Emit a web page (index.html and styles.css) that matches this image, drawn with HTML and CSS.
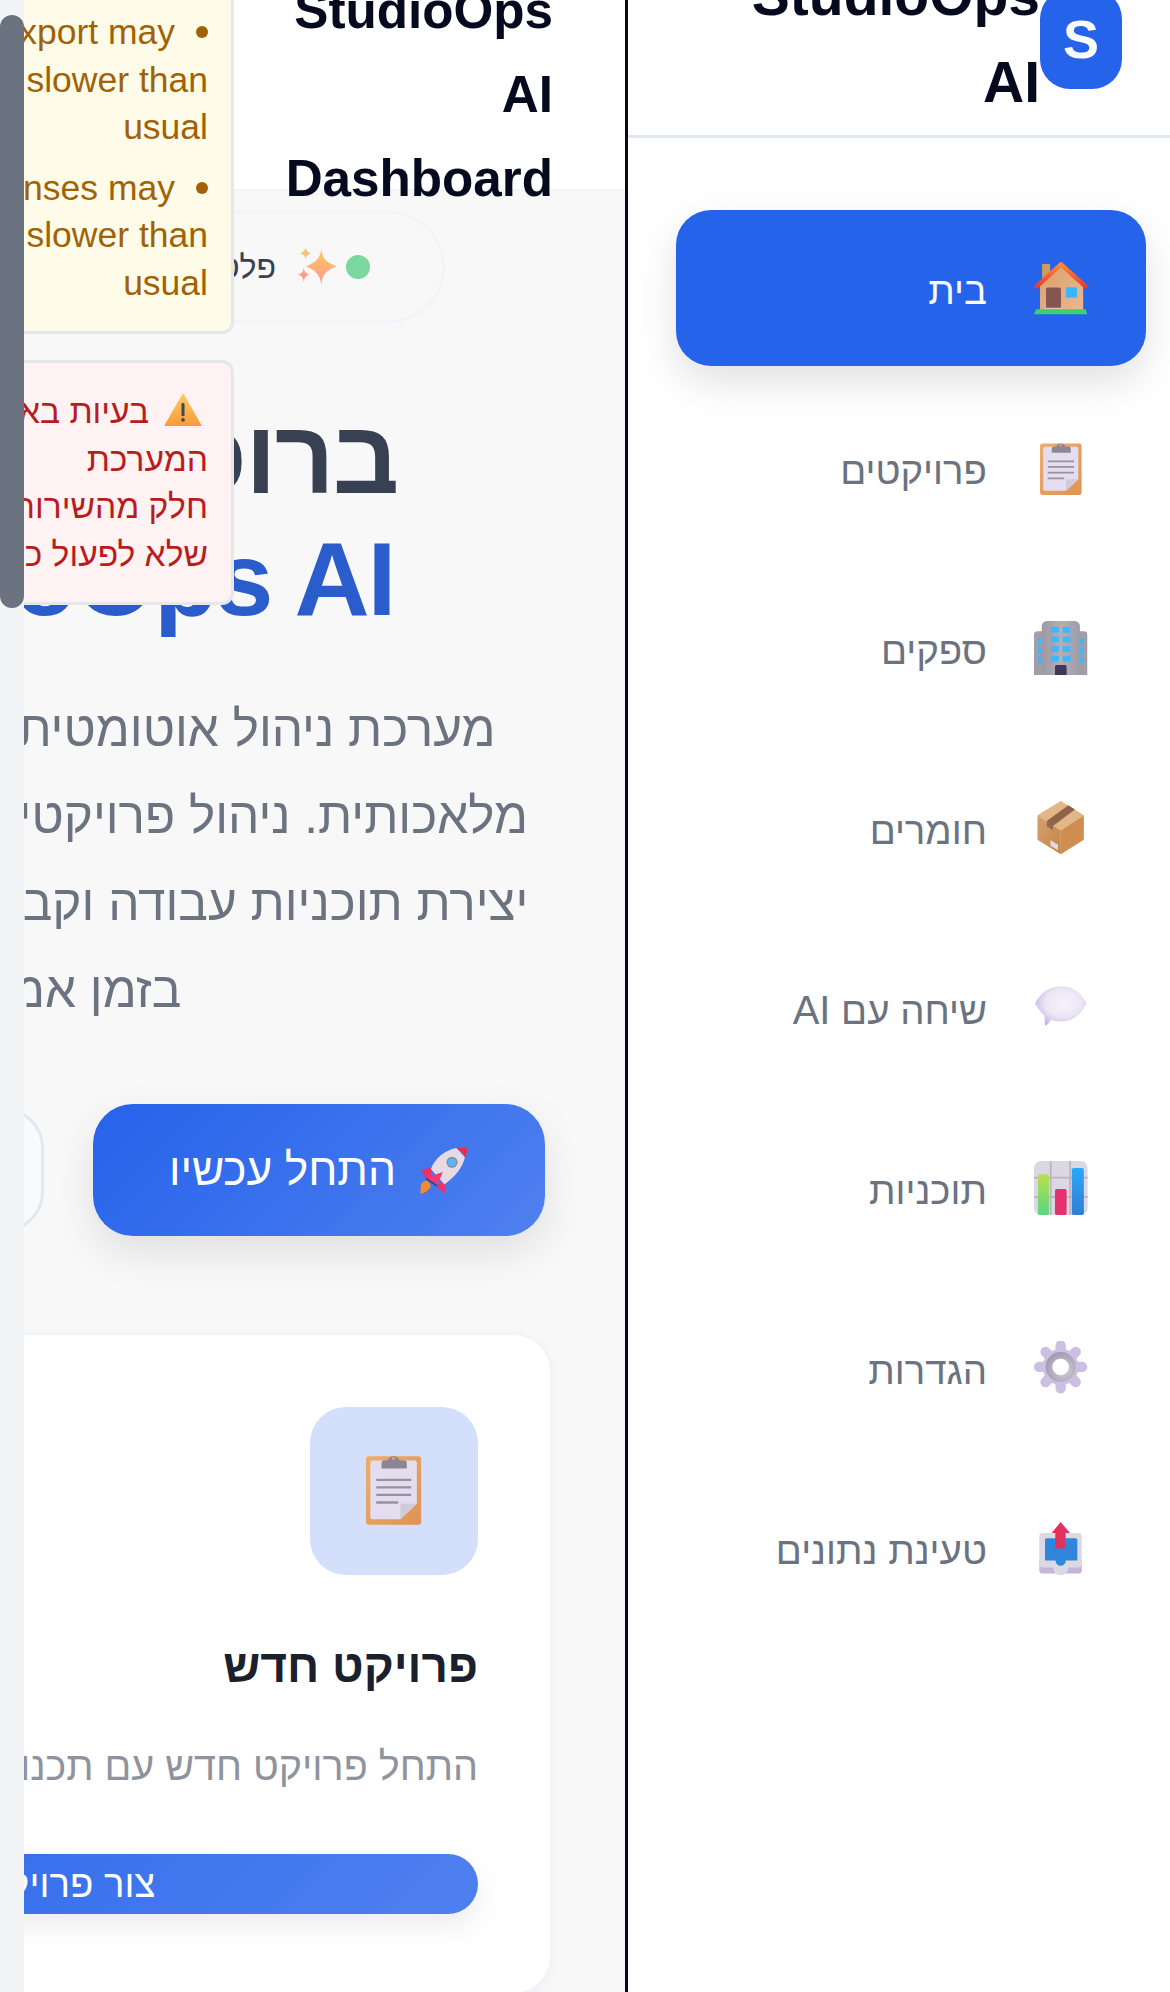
FILE: index.html
```html
<!DOCTYPE html>
<html lang="he">

<head>
    <meta charset="utf-8">
    <title>StudioOps AI Dashboard</title>
    <link rel="stylesheet" href="styles.css">
</head>

<body>
    <svg class="defs" aria-hidden="true">
        <defs>
            <linearGradient id="g-orange" x1="0" y1="0" x2="1" y2="1">
                <stop offset="0" stop-color="#efac6c" />
                <stop offset="1" stop-color="#df9354" />
            </linearGradient>
            <linearGradient id="g-roof" x1="0" y1="0" x2="0" y2="1">
                <stop offset="0" stop-color="#ff8a2e" />
                <stop offset="1" stop-color="#e23e2e" />
            </linearGradient>
            <linearGradient id="g-wall" x1="0" y1="0" x2="1" y2="1">
                <stop offset="0" stop-color="#dba06c" />
                <stop offset="1" stop-color="#eab78f" />
            </linearGradient>
            <linearGradient id="g-tower" x1="0" y1="0" x2="1" y2="0">
                <stop offset="0" stop-color="#9c98a4" />
                <stop offset=".5" stop-color="#b3afb8" />
                <stop offset="1" stop-color="#a09ca8" />
            </linearGradient>
            <linearGradient id="g-box" x1="0" y1="0" x2="1" y2="1">
                <stop offset="0" stop-color="#d7a174" />
                <stop offset="1" stop-color="#c6843f" />
            </linearGradient>
            <linearGradient id="g-lime" x1="0" y1="0" x2="0" y2="1">
                <stop offset="0" stop-color="#b8e24a" />
                <stop offset="1" stop-color="#58d680" />
            </linearGradient>
            <linearGradient id="g-sky" x1="0" y1="0" x2="0" y2="1">
                <stop offset="0" stop-color="#2aa8f8" />
                <stop offset="1" stop-color="#2f7dd6" />
            </linearGradient>
            <linearGradient id="g-arrow" x1="0" y1="0" x2="1" y2="0">
                <stop offset="0" stop-color="#ea2a44" />
                <stop offset="1" stop-color="#d63a78" />
            </linearGradient>
            <linearGradient id="g-spark" x1="0" y1="0" x2="0" y2="1">
                <stop offset="0" stop-color="#ffc95e" />
                <stop offset="1" stop-color="#ff9a8c" />
            </linearGradient>
            <linearGradient id="g-warn" x1="0" y1="0" x2="0" y2="1">
                <stop offset="0" stop-color="#ffcb5c" />
                <stop offset="1" stop-color="#f89b3e" />
            </linearGradient>
            <radialGradient id="g-bubble" cx=".55" cy=".42" r=".6">
                <stop offset="0" stop-color="#f6f3fa" />
                <stop offset=".6" stop-color="#ebe5f4" />
                <stop offset="1" stop-color="#c4b7e0" />
            </radialGradient>
            <radialGradient id="g-ring" cx=".6" cy=".6" r=".6">
                <stop offset="0" stop-color="#d6d2dd" />
                <stop offset="1" stop-color="#a29cb0" />
            </radialGradient>

            <symbol id="i-clipboard" viewBox="0 0 32 32">
                <rect x="3.5" y="1.4" width="24.2" height="30" rx="1.4" fill="url(#g-orange)" />
                <path d="M6.4 3.3H24.8a1 1 0 0 1 1 1V22.3L18.6 29H6.4a1 1 0 0 1-1-1V4.3a1 1 0 0 1 1-1Z" fill="#e4ddf0" />
                <path d="M18.6 22.3H25.8L18.6 29Z" fill="#d0cbd8" />
                <path d="M10.3 6.800V4.600a1.400 1.400 0 0 1 1.400-1.400H13a2.800 2.800 0 0 1 5.200 0H20a1.400 1.400 0 0 1 1.400 1.400V6.800Z" fill="#8c8694" />
                <circle cx="15.600" cy="2.400" r=".7" fill="#e9a05c" />
                <path d="M8 11.800H23.300M8 15.100H23.300M8 18.400H23.300M8 21.700H17.600" stroke="#97929e" stroke-width="1" fill="none" />
            </symbol>

            <symbol id="i-home" viewBox="0 0 32 32">
                <rect x="4.700" y="1.700" width="4.700" height="10" fill="#cf9a63" />
                <path d="M3.500 13.500L15.700 2L28.600 13.500V28.600H3.500Z" fill="url(#g-wall)" />
                <path d="M1.600 14.800L15.700 2L30 14.800" fill="none" stroke="url(#g-roof)" stroke-width="2.600" stroke-linejoin="round" stroke-linecap="round" />
                <path d="M7 16.400a1 1 0 0 1 1-1H14.700a1 1 0 0 1 1 1V27.400H7Z" fill="#85564f" />
                <rect x="18.600" y="15.300" width="6.400" height="6" fill="#38b6ff" />
                <rect x="6.500" y="27.200" width="9.500" height="1" fill="#cfc8c4" />
                <path d="M1.200 28H30L31 31H0Z" fill="#3fcf6f" />
            </symbol>

            <symbol id="i-building" viewBox="0 0 32 32">
                <path d="M0 31.400V8a2 2 0 0 1 2-2H29a2 2 0 0 1 2 2V31.400Z" fill="#a19ea8" />
                <path d="M4.500 31.400V3a3 3 0 0 1 3-3H23.700a3 3 0 0 1 3 3V31.400Z" fill="url(#g-tower)" />
                <g fill="#3cb8fb">
                    <rect x="9.900" y="3.500" width="4.600" height="3.300" />
                    <rect x="16.700" y="3.500" width="4.600" height="3.300" />
                    <rect x="9.900" y="9.100" width="4.600" height="3.300" />
                    <rect x="16.700" y="9.100" width="4.600" height="3.300" />
                    <rect x="9.900" y="14.700" width="4.600" height="3.300" />
                    <rect x="16.700" y="14.700" width="4.600" height="3.300" />
                    <rect x="9.900" y="20.300" width="4.600" height="3.300" />
                    <rect x="16.700" y="20.300" width="4.600" height="3.300" />
                    <rect x="2.300" y="10" width="2.200" height="3.500" />
                    <rect x="2.300" y="15.700" width="2.200" height="3.500" />
                    <rect x="2.300" y="21" width="2.200" height="3.400" />
                    <rect x="26.700" y="10" width="2.200" height="3.500" />
                    <rect x="26.700" y="15.700" width="2.200" height="3.500" />
                    <rect x="26.700" y="21" width="2.200" height="3.400" />
                </g>
                <path d="M12.200 31.400V26.600a1 1 0 0 1 1-1H18a1 1 0 0 1 1 1V31.400Z" fill="#41365a" />
            </symbol>

            <symbol id="i-box" viewBox="0 0 32 32">
                <path d="M15.600 0L29 8.300L15.600 17L2 8.300Z" fill="#e3b688" />
                <path d="M2 8.300L15.600 17V31L2 22.500Z" fill="url(#g-box)" />
                <path d="M29 8.300V22.500L15.600 31V17Z" fill="#d08d50" />
                <path d="M7.400 11.700L20 2.500L23.800 5L11 14.500Z" fill="#8f6347" />
                <path d="M7.400 11.700L11 14L11 17L7.400 14.700Z" fill="#8e6a5c" />
                <path d="M9.600 22.900L14 25.400V28.600L9.600 26Z" fill="#dfd8ee" />
            </symbol>

            <symbol id="i-chat" viewBox="0 0 32 32">
                <path d="M15.700 3C24 3 28 8 30.600 13C28 18 24 23.500 15.700 23.500C13.400 23.500 11.600 23.200 10 22.600C9 24 8 25.600 6.500 26.200C6.200 24.500 6.200 22 6 20C3.500 18 2 15.500 .6 13C3 8 8 3 15.700 3Z" fill="url(#g-bubble)" />
            </symbol>

            <symbol id="i-chart" viewBox="0 0 32 32">
                <rect width="31.200" height="31.400" rx="4" fill="#dcd7e5" />
                <path d="M9.700 0V31.400M21 0V31.400M0 9.700H31.200M0 20.900H31.200" stroke="#bab4c1" stroke-width="1" fill="none" />
                <rect x="2.300" y="7.700" width="6.400" height="23.700" rx="1" fill="url(#g-lime)" />
                <rect x="12.200" y="16.300" width="6.800" height="15.100" rx="1" fill="#e5316f" />
                <rect x="22" y="4" width="7" height="27.400" rx="1" fill="url(#g-sky)" />
            </symbol>

            <symbol id="i-gear" viewBox="0 0 32 32">
                <g stroke="#cbbfe3" stroke-width="6" stroke-linecap="round">
                    <path d="M15.500 2.600V27.600" />
                    <path d="M3 15.100H28" />
                    <path d="M6.700 6.300L24.300 23.900" />
                    <path d="M24.300 6.300L6.700 23.900" />
                </g>
                <circle cx="15.500" cy="15.100" r="10.500" fill="#cbbfe3" />
                <circle cx="15.500" cy="15.100" r="8.700" fill="url(#g-ring)" />
                <circle cx="15.500" cy="15.100" r="4.800" fill="#fff" />
            </symbol>

            <symbol id="i-upload" viewBox="0 0 32 32">
                <rect x="3.100" y="21" width="24.700" height="9.600" rx="2" fill="#c4b5dc" />
                <path d="M3.100 9a2 2 0 0 1 2-2H25.800a2 2 0 0 1 2 2V25a2 2 0 0 1-2 2H20a4 4 0 0 1-9 0H5.100a2 2 0 0 1-2-2Z" fill="#dcd8e4" />
                <path d="M6.400 11a1 1 0 0 1 1-1H24.200a1 1 0 0 1 1 1V23H18.500a3 3 0 0 1-6 0H6.400Z" fill="#2f86db" />
                <path d="M15.500 .6L21 7H18.400V16H12.400V7H10.300Z" fill="url(#g-arrow)" />
            </symbol>

            <symbol id="i-rocket" viewBox="0 0 32 32">
                <path d="M.3 31.800L.6 26C1 24.500 3 23 4.500 23C6 23.500 7 25.500 7.400 26.700C6.500 28.500 4 31.500 .3 31.800Z" fill="#f88a2a" />
                <path d="M.5 16L8.600 13.500L7 20L5 22.700Z" fill="#ee2f6c" />
                <path d="M16.700 31.800L11 26.700L18 22L17.900 24.400Z" fill="#ee2f6c" />
                <path d="M24.800 .7C17 2 10 8 7.400 15L16.700 25.500C24 20 29 14 30.600 7Z" fill="#e6dbe4" />
                <path d="M24.800 .7C26.500 1 32.500 0 32.500 0C32.500 0 32 5.500 30.600 7C29.500 4.500 27.500 2 24.800 .7Z" fill="#f22a4e" />
                <circle cx="21.800" cy="10.400" r="3.800" fill="#8f8a9c" />
                <circle cx="21.800" cy="10.400" r="2.800" fill="#5ab4ff" />
                <path d="M4 21L15.500 17L12 25.500Z" fill="#f23a72" />
                <path d="M4 21.300L11.500 26.500" stroke="#4a3a5e" stroke-width="1" />
            </symbol>

            <symbol id="i-sparkles" viewBox="0 0 32 32">
                <path d="M19 1.500C20 9 22 12 31.500 15.500C22 19 20 22 19 30C18 22 15 19 7 15.500C15 12 18 9 19 1.500Z" fill="url(#g-spark)" />
                <path d="M6.600 0C7 3 8 4 11 5C8 6 7 7 6.600 10C6 7 5 6 2 5C5 4 6 3 6.600 0Z" fill="#f8c270" />
                <path d="M5 16.500C5.500 20 6.500 21 10 22C6.500 23 5.500 24.500 5 28C4.500 24.500 3.500 23 0 22C3.500 21 4.500 20 5 16.500Z" fill="#ff9d8a" />
            </symbol>

            <symbol id="i-warning" viewBox="0 0 36 32">
                <path d="M18 1L35.500 31.500H.5Z" fill="url(#g-warn)" stroke="url(#g-warn)" stroke-width="1" stroke-linejoin="round" />
                <rect x="16.500" y="9.500" width="3" height="13" rx="1.500" fill="#46465a" />
                <circle cx="18" cy="26" r="1.800" fill="#46465a" />
            </symbol>
        </defs>
    </svg>

    <div class="page">
        <div class="track">
            <div class="thumb"></div>
        </div>

        <main class="main">
            <header class="main-head">
                <h1 class="main-title">StudioOps<br>AI<br>Dashboard</h1>
            </header>

            <section class="hero">
                <div class="pill">
                    <span class="dot"></span>
                    <svg class="sparkles"><use href="#i-sparkles" /></svg>
                    <span>פלטפורמה חכמה לניהול פרויקטים והפקות</span>
                </div>
                <h2 class="hero-title">ברוכים הבאים<br><span class="accent">StudioOps AI</span></h2>
                <p class="hero-text">
                    מערכת ניהול אוטומטית מתקדמת וחכמה<br>
                    מלאכותית. ניהול פרויקטים, ספקים וחומרים,<br>
                    יצירת תוכניות עבודה וקבלת תובנות עסקיות,<br>
                    בזמן אמת
                </p>
                <div class="hero-btns">
                    <a class="btn btn-main"><svg class="rocket"><use href="#i-rocket" /></svg>התחל עכשיו</a>
                    <a class="btn btn-ghost">למד עוד</a>
                </div>
            </section>

            <section class="card">
                <div class="card-icon"><svg><use href="#i-clipboard" /></svg></div>
                <h3 class="card-title">פרויקט חדש</h3>
                <p class="card-text">התחל פרויקט חדש עם תכנון אוטומטי מלא של כל שלבי העבודה והתקציב</p>
                <a class="card-btn">צור פרויקט חדש</a>
            </section>
        </main>

        <aside class="side">
            <div class="side-head">
                <div class="logo">S</div>
                <div class="side-title">StudioOps<br>AI</div>
            </div>
            <nav class="nav">
                <a class="nav-item active"><svg><use href="#i-home" /></svg><span>בית</span></a>
                <a class="nav-item"><svg><use href="#i-clipboard" /></svg><span>פרויקטים</span></a>
                <a class="nav-item"><svg><use href="#i-building" /></svg><span>ספקים</span></a>
                <a class="nav-item"><svg><use href="#i-box" /></svg><span>חומרים</span></a>
                <a class="nav-item"><svg><use href="#i-chat" /></svg><span>שיחה עם <span class="latin">AI</span></span></a>
                <a class="nav-item"><svg><use href="#i-chart" /></svg><span>תוכניות</span></a>
                <a class="nav-item"><svg><use href="#i-gear" /></svg><span>הגדרות</span></a>
                <a class="nav-item"><svg><use href="#i-upload" /></svg><span>טעינת נתונים</span></a>
            </nav>
        </aside>

        <div class="alerts">
            <div class="alert alert-warn">
                <ul>
                    <li>Export may<br>slower than<br>usual</li>
                    <li>Responses may<br>slower than<br>usual</li>
                </ul>
            </div>
            <div class="alert alert-error">
                <svg class="warning"><use href="#i-warning" /></svg>בעיות באתחול<br>
                המערכת<br>
                חלק מהשירותים עלולים<br>
                שלא לפעול כראוי
            </div>
        </div>
    </div>
</body>

</html>
```

FILE: styles.css
```css
html,
body {
    margin: 0;
    height: 1992px;
    overflow: hidden;
    font-family: "Liberation Sans", "Noto Sans", sans-serif;
    background-color: #f8f8f9;
}

h1,
h2,
h3,
p,
ul {
    margin: 0;
    padding: 0;
}

.defs {
    display: block;
    width: 0;
    height: 0;
}

.page {
    position: relative;
    display: flex;
    height: 1992px;
    overflow: hidden;
}

.track {
    flex: none;
    width: 24px;
    padding-top: 15px;
    box-sizing: border-box;
    background-color: #f3f4f6;
}

.thumb {
    height: 593px;
    border-radius: 12px;
    background-color: #6b7280;
}

/* main column */
.main {
    flex: 1;
    min-width: 0;
    direction: rtl;
    overflow: hidden;
    background-color: #f8f8f9;
    border-right: 3px solid #050a1e;
}

.main-head {
    display: flow-root;
    height: 189px;
    padding-right: 72px;
    background-color: #fff;
    border-bottom: 2px solid #f1f5f9;
}

.main-title {
    margin-top: -31px;
    font-size: 51.2px;
    line-height: 84px;
    font-weight: 700;
    color: #050a1e;
}

.hero {
    width: 948px;
    margin-top: 20px;
    margin-right: 72px;
    text-align: center;
}

.pill {
    display: flex;
    align-items: center;
    box-sizing: border-box;
    width: 732px;
    height: 112px;
    margin: 0 auto;
    padding-right: 72px;
    border: 3px solid #f1f5f9;
    border-radius: 56px;
    font-size: 32px;
    color: #374151;
    white-space: nowrap;
}

.dot {
    flex: none;
    width: 24px;
    height: 24px;
    border-radius: 50%;
    background-color: #7ad8a0;
}

.sparkles {
    flex: none;
    width: 43px;
    height: 40px;
    margin: 0 7px 0 20px;
}

.hero-title {
    margin-top: 73px;
    font-size: 104px;
    line-height: 122px;
    letter-spacing: -2px;
    font-weight: 700;
    color: #374151;
}

.accent {
    color: #2a5ccc;
}

.hero-text {
    margin-top: 45px;
    font-size: 49.5px;
    line-height: 87px;
    color: #6b7280;
    white-space: nowrap;
}

.hero-btns {
    display: flex;
    align-items: center;
    gap: 49px;
    margin-top: 71px;
    margin-right: 8px;
}

.btn {
    display: flex;
    align-items: center;
    box-sizing: border-box;
    flex: none;
    font-size: 44.3px;
    white-space: nowrap;
}

.btn-main {
    gap: 24px;
    height: 132px;
    padding: 0 78px 0 76px;
    border-radius: 40px;
    color: #fff;
    background: linear-gradient(135deg, #2563eb, #4f80ef);
    box-shadow: 0 16px 40px rgba(0, 0, 0, 0.1);
}

.btn-ghost {
    justify-content: center;
    width: 419px;
    height: 124px;
    border: 3px solid #e2e8f0;
    border-radius: 40px;
    color: #374151;
    background-color: #f8fafc;
}

.rocket {
    flex: none;
    width: 47px;
    height: 47px;
}

/* card */
.card {
    box-sizing: border-box;
    width: 1054px;
    height: 664px;
    margin-top: 96px;
    margin-right: 72px;
    padding: 72px 72px 70px;
    background-color: #fff;
    border: 3px solid #f1f5f9;
    border-radius: 40px;
    box-shadow: 0 4px 12px rgba(0, 0, 0, 0.03);
}

.card-icon {
    display: flex;
    align-items: center;
    justify-content: center;
    width: 168px;
    height: 168px;
    border-radius: 36px;
    background-color: #d4e0fb;
}

.card-icon svg {
    width: 73px;
    height: 73px;
    margin-bottom: 3px;
}

.card-title {
    margin-top: 55px;
    font-size: 46px;
    line-height: 72px;
    font-weight: 700;
    color: #1a202c;
}

.card-text {
    margin-top: 36px;
    font-size: 39.5px;
    line-height: 56px;
    color: #8e939e;
    white-space: nowrap;
}

.card-btn {
    display: block;
    height: 60px;
    margin-top: 60px;
    border-radius: 30px;
    font-size: 38.4px;
    line-height: 60px;
    text-align: center;
    color: #fff;
    background: linear-gradient(135deg, #2563eb, #4f80ef);
    box-shadow: 0 12px 30px rgba(0, 0, 0, 0.08);
}

/* sidebar */
.side {
    flex: none;
    width: 542px;
    direction: rtl;
    background-color: #fff;
}

.side-head {
    display: flex;
    height: 135px;
    padding-right: 48px;
    border-bottom: 3px solid #e2e8f0;
}

.logo {
    flex: none;
    width: 82px;
    height: 100px;
    margin-top: -11px;
    border-radius: 30px;
    font-size: 54px;
    font-weight: 700;
    line-height: 100px;
    text-align: center;
    color: #f8fafc;
    background-color: #2563eb;
}

.side-title {
    margin-top: -48px;
    font-size: 57px;
    line-height: 87px;
    font-weight: 700;
    color: #050a1e;
}

.nav {
    display: flex;
    flex-direction: column;
    gap: 24px;
    margin: 72px 24px 0 48px;
}

.nav-item {
    display: flex;
    align-items: center;
    gap: 47px;
    height: 156px;
    padding-right: 57px;
    border-radius: 35px;
    font-size: 38.4px;
    color: #6b7280;
}

.nav-item span {
    margin-top: 5px;
}

.nav-item .latin {
    font-size: 40px;
}

.nav-item svg {
    flex: none;
    width: 55px;
    height: 55px;
}

.nav-item.active {
    color: #f8fafc;
    background-color: #2563eb;
    box-shadow: 0 16px 40px rgba(0, 0, 0, 0.12);
}

/* alerts float over the hero */
.alerts {
    position: absolute;
    top: 0;
    left: 24px;
    width: 210px;
    overflow: hidden;
    direction: rtl;
}

.alert {
    box-sizing: border-box;
    width: 420px;
    border: 3px solid #e5e7eb;
    border-radius: 12px;
    line-height: 47.5px;
    white-space: nowrap;
}

.alert-warn {
    margin-top: -42px;
    padding: 48px 23px 24px;
    font-size: 35.5px;
    color: #a16207;
    background-color: #fefce8;
}

.alert-warn ul {
    list-style: none;
}

.alert-warn li::before {
    content: "";
    display: inline-block;
    width: 12px;
    height: 12px;
    margin-left: 21px;
    border-radius: 50%;
    background-color: currentColor;
    vertical-align: 6px;
}

.alert-warn li + li {
    margin-top: 13px;
}

.alert-error {
    margin-top: 26px;
    padding: 25px 23px 24px;
    font-size: 33.6px;
    color: #b91c1c;
    background-color: #fef2f2;
}

.warning {
    width: 38px;
    height: 33px;
    margin: 0 6px 0 15px;
    vertical-align: -3px;
}
```
